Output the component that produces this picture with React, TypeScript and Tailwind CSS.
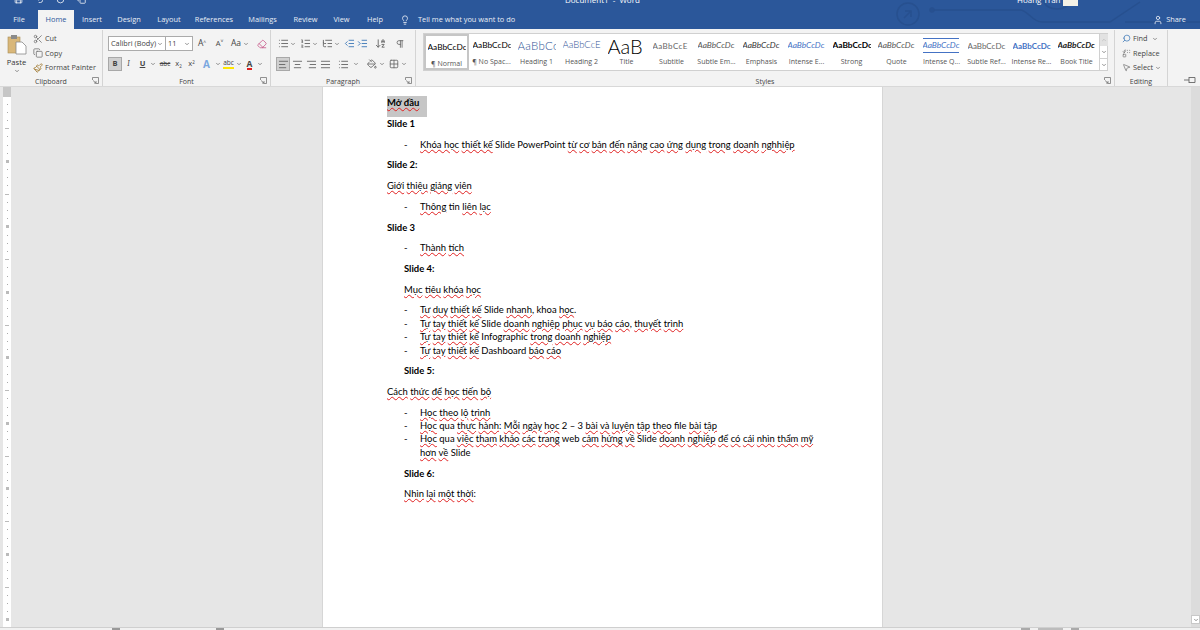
import React from 'react';
import {
  AlignCenter, AlignJustify, AlignLeft, AlignRight, ArrowDownAZ, ChevronDown, ChevronUp, Copy, IndentDecrease,
  IndentIncrease, Lightbulb, List, ListOrdered, ListTree, MousePointer2, Paintbrush, Pilcrow, Replace, Scissors,
  Search, User, Eraser, Grid2x2, PaintBucket, Save, Undo2, RotateCw,
} from 'lucide-react';

const tabs = [
  { name: 'File', w: 'w-[38px]' },
  { name: 'Home', w: 'w-[36px]', active: true },
  { name: 'Insert', w: 'w-[36px]' },
  { name: 'Design', w: 'w-[38px]' },
  { name: 'Layout', w: 'w-[42px]' },
  { name: 'References', w: 'w-[48px]' },
  { name: 'Mailings', w: 'w-[49px]' },
  { name: 'Review', w: 'w-[37px]' },
  { name: 'View', w: 'w-[35px]' },
  { name: 'Help', w: 'w-[32px]' },
];

const styles = [
  { label: '¶ Normal', sample: 'AaBbCcDc', cls: 'text-[8.3px] text-black', active: true },
  { label: '¶ No Spac...', sample: 'AaBbCcDc', cls: 'text-[8.3px] text-black' },
  { label: 'Heading 1', sample: 'AaBbCc', cls: 'text-[11.5px] font-light tracking-[0.3px] text-[#2f5496]' },
  { label: 'Heading 2', sample: 'AaBbCcE', cls: 'text-[9.5px] font-light text-[#2f5496]' },
  { label: 'Title', sample: 'AaB', cls: 'text-[20px] font-light leading-[14px] text-black' },
  { label: 'Subtitle', sample: 'AaBbCcE', cls: 'text-[8px] tracking-[0.4px] text-[#666]' },
  { label: 'Subtle Em...', sample: 'AaBbCcDc', cls: 'text-[8.3px] italic text-[#555]' },
  { label: 'Emphasis', sample: 'AaBbCcDc', cls: 'text-[8.3px] italic text-[#333]' },
  { label: 'Intense E...', sample: 'AaBbCcDc', cls: 'text-[8.3px] italic text-[#4472c4]' },
  { label: 'Strong', sample: 'AaBbCcDc', cls: 'text-[8.3px] font-bold text-black' },
  { label: 'Quote', sample: 'AaBbCcDc', cls: 'text-[8.3px] italic text-[#555]' },
  { label: 'Intense Q...', sample: 'AaBbCcDc', cls: 'text-[8.3px] italic text-[#4472c4] border-y border-[#4472c4]' },
  { label: 'Subtle Ref...', sample: 'AaBbCcDc', cls: 'text-[8px] text-[#666]' },
  { label: 'Intense Re...', sample: 'AaBbCcDc', cls: 'text-[8px] font-bold text-[#4472c4]' },
  { label: 'Book Title', sample: 'AaBbCcDc', cls: 'text-[8.3px] font-bold italic text-[#222]' },
];

// [..] marks a word group with the red spell check underline
function Marked({ text }: { text: string }) {
  const parts = text.split(/(\[[^\]]+\])/);
  return (
    <>
      {parts.map((p, i) =>
        p.startsWith('[') ? (
          <span key={i} className="underline decoration-wavy decoration-[#e02020] decoration-[0.5px] underline-offset-[1px]">
            {p.slice(1, -1)}
          </span>
        ) : (
          <span key={i}>{p}</span>
        ),
      )}
    </>
  );
}

function Para({ text, bold, indent }: { text: string; bold?: boolean; indent?: boolean }) {
  return (
    <p className={`mb-[7.3px] ${bold ? 'font-bold' : ''} ${indent ? 'ml-[17px]' : ''}`}>
      <Marked text={text} />
    </p>
  );
}

function Bullets({ items }: { items: string[] }) {
  return (
    <ul className="mb-[7.3px]">
      {items.map((t) => (
        <li key={t} className="flex">
          <span className="ml-[17px] w-[16px] shrink-0">-</span>
          <span>
            <Marked text={t} />
          </span>
        </li>
      ))}
    </ul>
  );
}

function Caret({ className = '' }: { className?: string }) {
  return <ChevronDown size={6} strokeWidth={2.5} className={`text-[#555] ${className}`} />;
}

function Launcher() {
  return (
    <svg width="7" height="7" viewBox="0 0 7 7" className="absolute right-[3px] bottom-[2px] text-[#777]" fill="none" stroke="currentColor" strokeWidth="0.8">
      <path d="M0.5 3V0.5H6.5V6.5H3.5M1 3.5L4 6M4 4V6H2" />
    </svg>
  );
}

function Group({ label, w, children }: { label: string; w: string; children: React.ReactNode }) {
  return (
    <div className={`${w} relative flex h-full shrink-0 flex-col border-r border-[#d4d4d4]`}>
      <div className="h-[47px] shrink-0">{children}</div>
      <div className="flex-1 text-center text-[7px] leading-[9px] text-[#444]">{label}</div>
      {label !== 'Editing' && <Launcher />}
    </div>
  );
}

function Btn({ w, active, children }: { w: string; active?: boolean; children: React.ReactNode }) {
  return (
    <div className={`${w} flex h-[14px] shrink-0 items-center justify-center ${active ? 'border border-[#a8a8a8] bg-[#d0d0d0]' : ''}`}>
      {children}
    </div>
  );
}

function Clipboard() {
  return (
    <Group label="Clipboard" w="w-[103px]">
      <div className="flex h-full">
        <div className="flex w-[33px] flex-col items-center pt-[4px] text-[7.6px] text-[#333]">
          <svg width="20" height="21" viewBox="0 0 20 21">
            <rect x="1" y="3" width="12" height="16" fill="#d9b779" stroke="#a98d55" strokeWidth="0.6" />
            <rect x="4" y="1" width="6" height="4" fill="#8a8a8a" />
            <path d="M9 8H15L19 12V20H9Z" fill="#fff" stroke="#888" strokeWidth="0.8" />
          </svg>
          <span className="mt-[3px] leading-[9px]">Paste</span>
          <Caret className="mt-[1px]" />
        </div>
        <div className="flex flex-col gap-[1px] pt-[2px] text-[7.3px] leading-[13.5px] text-[#444]">
          <div className="flex items-center gap-[2px]"><Scissors size={10} className="text-[#777]" />Cut</div>
          <div className="flex items-center gap-[2px]"><Copy size={10} className="text-[#777]" />Copy</div>
          <div className="flex items-center gap-[2px]"><Paintbrush size={10} className="text-[#a07a30]" />Format Painter</div>
        </div>
      </div>
    </Group>
  );
}

function FontGroup() {
  return (
    <Group label="Font" w="w-[168px]">
      <div className="flex h-[21px] items-end pl-[5px] text-[#444]">
        <div className="flex h-[15px] w-[58px] items-center justify-between border border-[#ababab] bg-white pl-[2px] pr-[2px] text-[7.3px]">
          Calibri (Body)<Caret />
        </div>
        <div className="flex h-[15px] w-[27px] items-center justify-between border border-l-0 border-[#ababab] bg-white pl-[2px] pr-[2px] text-[7.3px]">
          11<Caret />
        </div>
        <div className="flex h-[15px] items-center text-[8.5px]">
          <span className="w-[18px] text-center">A<sup className="text-[5px]">^</sup></span>
          <span className="w-[17px] text-center text-[7.5px]">A<sup className="text-[5px]">˅</sup></span>
          <span className="ml-[3px] flex w-[20px] items-center gap-[2px]">Aa<Caret /></span>
          <Eraser size={10} className="ml-[6px] text-[#c85a8a]" />
        </div>
      </div>
      <div className="mt-[6px] flex items-center pl-[5px] text-[7.5px] text-[#444]">
        <Btn w="w-[14px]" active><b>B</b></Btn>
        <Btn w="w-[13px]"><i className="font-serif">I</i></Btn>
        <Btn w="w-[15px]"><u className="font-bold">U</u></Btn>
        <Caret className="mr-[2px]" />
        <Btn w="w-[14px]"><s className="text-[6.5px]">abc</s></Btn>
        <Btn w="w-[13px]"><span>x<sub className="text-[4.5px]">2</sub></span></Btn>
        <Btn w="w-[13px]"><span>x<sup className="text-[4.5px]">2</sup></span></Btn>
        <Btn w="w-[17px]"><span className="text-[10px] font-bold text-[#7aa7e0]">A</span></Btn>
        <Caret />
        <Btn w="w-[15px]"><span className="border-b-2 border-[#ffe600] text-[6.5px] leading-[8px]">abc</span></Btn>
        <Caret />
        <Btn w="w-[15px]"><span className="border-b-2 border-[#e02020] text-[8.5px] font-bold leading-[9px]">A</span></Btn>
        <Caret />
      </div>
    </Group>
  );
}

function ParagraphGroup() {
  return (
    <Group label="Paragraph" w="w-[145px]">
      <div className="flex h-[21px] items-end pl-[5px] text-[#666]">
        <div className="flex h-[15px] items-center">
          <Btn w="w-[14px]"><List size={11} /></Btn><Caret className="mr-[2px]" />
          <Btn w="w-[14px]"><ListOrdered size={11} /></Btn><Caret className="mr-[2px]" />
          <Btn w="w-[14px]"><ListTree size={11} /></Btn><Caret className="mr-[3px]" />
          <Btn w="w-[13px]"><IndentDecrease size={11} className="text-[#3f79b8]" /></Btn>
          <Btn w="w-[13px]"><IndentIncrease size={11} className="text-[#3f79b8]" /></Btn>
          <Btn w="w-[22px]"><ArrowDownAZ size={11} /></Btn>
          <Btn w="w-[17px]"><Pilcrow size={10} /></Btn>
        </div>
      </div>
      <div className="mt-[6px] flex items-center pl-[5px] text-[#666]">
        <Btn w="w-[14px]" active><AlignLeft size={11} /></Btn>
        <Btn w="w-[14px]"><AlignCenter size={11} /></Btn>
        <Btn w="w-[14px]"><AlignRight size={11} /></Btn>
        <Btn w="w-[15px]"><AlignJustify size={11} /></Btn>
        <Btn w="w-[20px]"><List size={11} /></Btn><Caret className="mr-[6px]" />
        <Btn w="w-[14px]"><PaintBucket size={10} /></Btn><Caret className="mr-[2px]" />
        <Btn w="w-[14px]"><Grid2x2 size={10} /></Btn><Caret />
      </div>
    </Group>
  );
}

function StylesGroup() {
  return (
    <Group label="Styles" w="w-[699px]">
      <div className="ml-[7px] mt-[3px] flex h-[38px] w-[685px] border border-[#d0d0d0] bg-white">
        <div className="flex flex-1">
          {styles.map((s) => (
            <div
              key={s.label}
              className={`flex w-[45px] shrink-0 flex-col items-center overflow-hidden ${s.active ? 'border-2 border-[#c6c6c6]' : ''}`}
            >
              <div className="flex h-[23px] w-[38px] items-center justify-start overflow-hidden whitespace-nowrap">
                <span className={`font-['Lato',sans-serif] ${s.cls}`}>{s.sample}</span>
              </div>
              <div className="whitespace-nowrap text-[7px] leading-[9px] text-[#555]">{s.label}</div>
            </div>
          ))}
        </div>
        <div className="flex w-[9px] shrink-0 flex-col border-l border-[#d0d0d0] text-[#555]">
          <div className="flex h-[12px] items-center justify-center bg-[#e2e2e2]"><ChevronUp size={6} className="text-[#aaa]" /></div>
          <div className="flex h-[12px] items-center justify-center"><Caret /></div>
          <div className="flex h-[12px] items-center justify-center border-t border-[#d0d0d0]"><Caret /></div>
        </div>
      </div>
    </Group>
  );
}

function Editing() {
  return (
    <Group label="Editing" w="w-[53px]">
      <div className="flex flex-col gap-[1px] pl-[7px] pt-[2px] text-[7.3px] leading-[13.5px] text-[#444]">
        <div className="flex items-center gap-[2px]"><Search size={9} className="-scale-x-100 text-[#3f79b8]" />Find<Caret className="ml-[2px]" /></div>
        <div className="flex items-center gap-[2px]"><Replace size={9} className="text-[#777]" />Replace</div>
        <div className="flex items-center gap-[2px]"><MousePointer2 size={9} className="text-[#777]" />Select<Caret /></div>
      </div>
    </Group>
  );
}

function Ruler() {
  const ticks = Array.from({ length: 67 }, (_, i) => i);
  return (
    <div className="flex w-[12px] shrink-0 flex-col items-center overflow-hidden pl-[2px]">
      <div className="h-[10px] w-[8px] shrink-0 bg-[#c6c6c6]" />
      <div className="flex h-[531px] w-[8px] flex-col items-center overflow-hidden bg-white pt-[3px]">
        {ticks.map((i) => (
          <div key={i} className="flex h-[8.2px] shrink-0 items-center">
            <div className={i % 8 === 7 ? 'h-[3px] w-[3px] bg-[#bbb]' : i % 4 === 3 ? 'h-[1px] w-[4px] bg-[#bbb]' : 'h-[1px] w-[1px] bg-[#aaa]'} />
          </div>
        ))}
      </div>
    </div>
  );
}

export default function App() {
  return (
    <div className="flex h-[630px] w-[1200px] flex-col overflow-hidden bg-[#e6e6e6] font-['Open_Sans',sans-serif]">
      {/* title bar, the window is cut off at the top */}
      <div className="relative h-[29px] shrink-0 overflow-hidden bg-[#2b579a] text-white">
        <svg width="420" height="29" viewBox="0 0 420 29" className="absolute left-[780px] top-0 text-[#27508f]" fill="none" stroke="currentColor" strokeWidth="1.5">
          <circle cx="128" cy="14" r="11" />
          <path d="M124 18L131 11M125 11H131V17" />
          <path d="M150 10H240C248 10 252 22 262 22H330L360 2M264 0C264 12 290 12 290 0M345 22H420" />
          <circle cx="152" cy="10" r="2" />
        </svg>
        <div className="relative flex h-[10px] items-start overflow-hidden">
          <div className="flex w-[565px] shrink-0 items-start gap-[12px] pl-[14px]">
            <Save size={9} className="-translate-y-[5px]" />
            <Undo2 size={9} className="-translate-y-[5px]" />
            <RotateCw size={9} className="-translate-y-[5px]" />
            <Copy size={9} className="-translate-y-[5px]" />
          </div>
          <span className="w-[452px] shrink-0 -translate-y-[5px] whitespace-pre text-[8px] leading-[10px]">Document1  -  Word</span>
          <span className="w-[46px] shrink-0 -translate-y-[5px] whitespace-nowrap text-[8px] leading-[10px]">Hoàng Trần</span>
          <div className="h-[6px] w-[15px] shrink-0 bg-[#f4f1e6]" />
        </div>
        <div className="relative flex h-[19px] text-[7.4px]">
          {tabs.map((t) => (
            <div
              key={t.name}
              className={`${t.w} flex shrink-0 items-center justify-center ${t.active ? 'bg-[#f3f3f3] text-[#2b579a]' : 'text-[#e8edf5]'}`}
            >
              {t.name}
            </div>
          ))}
          <div className="ml-[9px] flex items-center gap-[8px] text-[#e8edf5]">
            <Lightbulb size={10} />
            Tell me what you want to do
          </div>
          <div className="ml-auto mr-[14px] flex items-center gap-[3px] text-[#e8edf5]">
            <User size={10} />
            Share
          </div>
        </div>
      </div>

      {/* ribbon */}
      <div className="relative flex h-[58px] shrink-0 border-b border-[#d8d8d8] bg-[#f3f3f3] pt-[1px]">
        <Clipboard />
        <FontGroup />
        <ParagraphGroup />
        <StylesGroup />
        <Editing />
        <div className="absolute bottom-[2px] right-[4px] text-[#666]">
          <svg width="12" height="8" viewBox="0 0 12 8" fill="none" stroke="currentColor" strokeWidth="0.9">
            <path d="M0 4H5M5 1V7M5 1.5H11V6.5H5" />
          </svg>
        </div>
      </div>

      {/* document */}
      <div className="flex h-[540px] shrink-0 bg-[#e6e6e6]">
        <Ruler />
        <div className="ml-[310px] h-full w-[561px] shrink-0 border-x border-[#d6d6d6] bg-white pl-[64px] pr-[65px] pt-[9px] font-['Lato','Noto_Sans',sans-serif] text-[9.45px] leading-[13.4px] text-black">
          <p className="mb-0 h-[21px] w-[40px] bg-[#c6c6c6] font-bold">
            <Marked text="[Mở đầu]" />
          </p>
          <Para bold text="Slide 1" />
          <Bullets items={['[Khóa học] [thiết kế] Slide PowerPoint [từ] [cơ] [bản] [đến] [nâng] [cao] [ứng] [dụng] [trong] [doanh] [nghhiệp]']} />
          <Para bold text="Slide 2:" />
          <Para text="[Giới] [thiệu] [giảng] [viên]" />
          <Bullets items={['[Thông] tin [liên] [lạc]']} />
          <Para bold text="Slide 3" />
          <Bullets items={['[Thành] [tích]']} />
          <Para bold indent text="Slide 4:" />
          <Para indent text="[Mục] [tiêu] [khóa] [học]" />
          <Bullets
            items={[
              '[Tư] [duy] [thiết] [kế] Slide [nhanh], khoa [học].',
              '[Tự] [tay] [thiết] [kế] Slide [doanh] [nghiệp] [phục] [vụ] [báo] [cáo], [thuyết] [trình]',
              '[Tự] [tay] [thiết] [kế] Infographic [trong] [doanh] [nghiệp]',
              '[Tự] [tay] [thiết] [kế] Dashboard [báo] [cáo]',
            ]}
          />
          <Para bold indent text="Slide 5:" />
          <Para text="[Cách] [thức] [để] [học] [tiến] [bộ]" />
          <Bullets
            items={[
              '[Học] [theo] [lộ] [trình]',
              '[Học] qua [thực] [hành]: [Mỗi] [ngày] [học] 2 – 3 [bài] [và] [luyện] [tập] [theo] file [bài] [tập]',
              '[Học] qua [việc] [tham] [khảo] [các] [trang] web [cảm] [hứng] [về] Slide [doanh] [nghiệp] [để] [có] [cái] [nhìn] [thẩm] [mỹ] [hơn] [về] Slide',
            ]}
          />
          <Para bold indent text="Slide 6:" />
          <Para indent text="[Nhìn] [lại] [một] [thời]:" />
        </div>
        <div className="ml-auto flex w-[9px] shrink-0 flex-col justify-end bg-[#dcdcdc] pb-[3px]">
          <div className="flex h-[9px] items-center justify-center border border-[#c8c8c8] bg-white"><Caret /></div>
        </div>
      </div>

      {/* status bar, only its top edge is in the picture */}
      <div className="relative flex-1 border-t border-[#cfcfcf] bg-[#f1f1f1]">
        <div className="absolute left-[112px] top-0 h-[2px] w-[8px] bg-[#999]" />
        <div className="absolute left-[216px] top-0 h-[2px] w-[8px] bg-[#999]" />
        <div className="absolute left-[1021px] top-0 h-[2px] w-[9px] bg-[#aaa]" />
        <div className="absolute left-[1038px] top-0 h-[2px] w-[25px] bg-[#bcbcbc]" />
        <div className="absolute left-[1071px] top-0 h-[2px] w-[8px] bg-[#aaa]" />
      </div>
    </div>
  );
}
